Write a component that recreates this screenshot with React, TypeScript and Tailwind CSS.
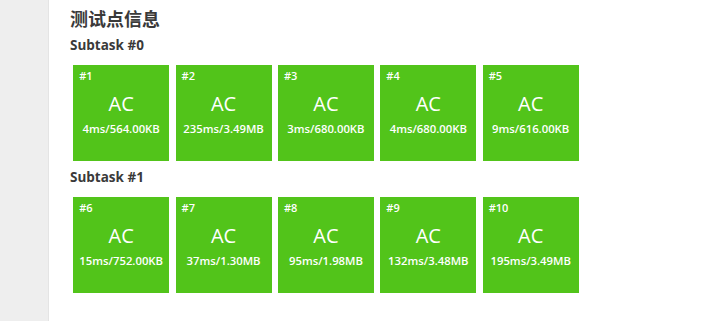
import React from "react";

const subtasks = [
  {
    name: "Subtask #0",
    cases: [
      { id: 1, info: "4ms/564.00KB" },
      { id: 2, info: "235ms/3.49MB" },
      { id: 3, info: "3ms/680.00KB" },
      { id: 4, info: "4ms/680.00KB" },
      { id: 5, info: "9ms/616.00KB" },
    ],
  },
  {
    name: "Subtask #1",
    cases: [
      { id: 6, info: "15ms/752.00KB" },
      { id: 7, info: "37ms/1.30MB" },
      { id: 8, info: "95ms/1.98MB" },
      { id: 9, info: "132ms/3.48MB" },
      { id: 10, info: "195ms/3.49MB" },
    ],
  },
];

export default function App() {
  return (
    <div
      className="flex w-[703px] h-[321px] overflow-hidden bg-white"
      style={{ fontFamily: '"Open Sans", "Noto Sans CJK SC", sans-serif' }}
    >
      <div className="w-[49px] shrink-0 bg-[#eeeeee] border-r border-[#e4e4e4]" />
      <div className="flex-1 pl-[21px] pt-[7px] text-[#3a3a3a]">
        <div className="text-[18px] leading-[24px] font-bold">测试点信息</div>
        {subtasks.map((st, i) => (
          <div key={st.name} className={i === 0 ? "mt-[4px]" : "mt-[3px]"}>
            <div className="text-[13.5px] leading-[20px] font-bold">{st.name}</div>
            <div className="flex mt-[7px]">
              {st.cases.map((c) => (
                <div
                  key={c.id}
                  className="my-[3px] mx-[3.2px] w-[96px] h-[96px] bg-[#52c41a] text-white relative flex flex-col items-center"
                >
                  <div className="absolute left-[6px] top-[3px] text-[11px] leading-[16px] font-semibold">
                    #{c.id}
                  </div>
                  <div className="mt-[25px] text-[20px] leading-[28px]">AC</div>
                  <div className="mt-[3px] text-[11.3px] leading-[16px] font-semibold">{c.info}</div>
                </div>
              ))}
            </div>
          </div>
        ))}
      </div>
    </div>
  );
}
